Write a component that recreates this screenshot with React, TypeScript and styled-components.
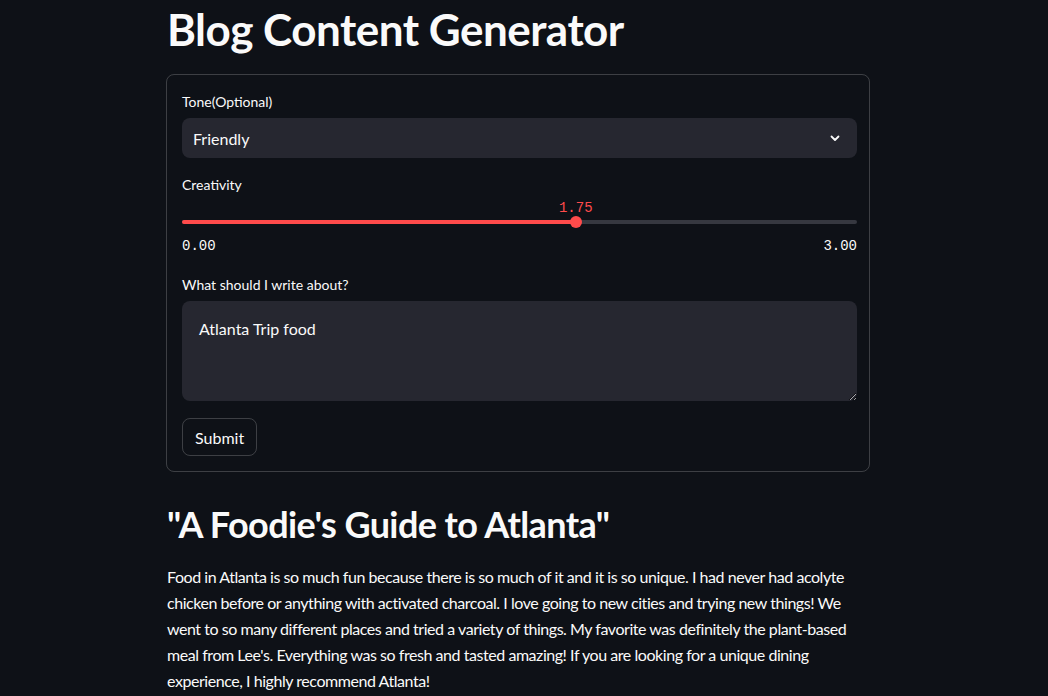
import React from 'react'
import styled, { createGlobalStyle } from 'styled-components'

const GlobalStyle = createGlobalStyle`
  html, body {
    margin: 0;
    padding: 0;
    background: #0e1117;
    color: rgb(250, 250, 250);
    font-family: Lato, "Noto Sans", sans-serif;
  }
`;

const Main = styled.main`
  width: 704px;
  margin-left: 166px;
`;

const Title = styled.h1`
  margin: 0;
  padding: 3px 0 19px 1px;
  font-size: 44px;
  line-height: 52px;
  font-weight: 700;
  letter-spacing: -0.5px;
`;

const Form = styled.form`
  border: 1px solid rgba(250, 250, 250, 0.2);
  border-radius: 8px;
  padding: 16px 12px 15px 15px;
  display: flex;
  flex-direction: column;
  gap: 16px;
`;

const Field = styled.div`
  display: flex;
  flex-direction: column;
`;

const Label = styled.label`
  font-size: 14px;
  line-height: 21px;
  margin-bottom: 6px;
`;

const Select = styled.div`
  height: 40px;
  background: #262730;
  border-radius: 8px;
  display: flex;
  align-items: center;
  justify-content: space-between;
  padding: 0 16px 0 11px;
  font-size: 16px;
`;

const SliderBox = styled.div`
  position: relative;
  display: flex;
  flex-direction: column;
`;

const ValueRow = styled.div`
  position: relative;
  height: 18px;
`;

const Value = styled.span`
  position: absolute;
  top: -2px;
  transform: translateX(-50%);
  font-family: "Liberation Mono", "DejaVu Sans Mono", monospace;
  font-size: 14px;
  line-height: 18px;
  color: #ff4b4b;
`;

const Track = styled.div`
  position: relative;
  height: 4px;
  margin: 1px 0 3px;
  border-radius: 2px;
  background: #363840;
`;

const Fill = styled.div`
  position: absolute;
  left: 0;
  top: 0;
  bottom: 0;
  border-radius: 2px;
  background: #ff4b4b;
`;

const Thumb = styled.div`
  position: absolute;
  top: 50%;
  width: 12px;
  height: 12px;
  border-radius: 50%;
  background: #ff4b4b;
  transform: translate(-50%, -50%);
`;

const MinMax = styled.div`
  display: flex;
  justify-content: space-between;
  margin-top: 9px;
  padding-bottom: 1px;
  font-family: "Liberation Mono", "DejaVu Sans Mono", monospace;
  font-size: 14px;
  line-height: 21px;
`;

const TextArea = styled.textarea`
  height: 100px;
  box-sizing: border-box;
  background: #262730;
  border: none;
  border-radius: 8px;
  padding: 16px 17px;
  color: rgb(250, 250, 250);
  font-family: Lato, "Noto Sans", sans-serif;
  font-size: 16px;
  line-height: 24px;
  resize: vertical;
  outline: none;
`;

const Button = styled.button`
  align-self: flex-start;
  height: 38px;
  margin-top: 1px;
  padding: 0 12px;
  background: transparent;
  border: 1px solid rgba(250, 250, 250, 0.2);
  border-radius: 8px;
  color: rgb(250, 250, 250);
  font-family: Lato, "Noto Sans", sans-serif;
  font-size: 16px;
`;

const Heading = styled.h2`
  margin: 0;
  padding: 30px 0 18px 1px;
  font-size: 36px;
  line-height: 44px;
  font-weight: 700;
  letter-spacing: -0.6px;
`;

const Paragraph = styled.p`
  margin: 0;
  padding-left: 1px;
  font-size: 16px;
  line-height: 26px;
  letter-spacing: -0.45px;
`;

function Chevron() {
  return (
    <svg width="12" height="12" viewBox="0 0 12 12" fill="none">
      <polyline points="2.5,4.5 6,8 9.5,4.5" stroke="#fafafa" strokeWidth="1.8" strokeLinecap="round" strokeLinejoin="round" />
    </svg>
  );
}

function App() {
  const min = 0;
  const max = 3;
  const value = 1.75;
  const pct = ((value - min) / (max - min)) * 100;

  return (
    <>
      <GlobalStyle />
      <Main>
        <Title>Blog Content Generator</Title>
        <Form onSubmit={(e) => e.preventDefault()}>
          <Field>
            <Label>Tone(Optional)</Label>
            <Select>
              <span>Friendly</span>
              <Chevron />
            </Select>
          </Field>
          <Field>
            <Label>Creativity</Label>
            <SliderBox>
              <ValueRow>
                <Value style={{ left: `${pct}%` }}>{value.toFixed(2)}</Value>
              </ValueRow>
              <Track>
                <Fill style={{ width: `${pct}%` }} />
                <Thumb style={{ left: `${pct}%` }} />
              </Track>
              <MinMax>
                <span>{min.toFixed(2)}</span>
                <span>{max.toFixed(2)}</span>
              </MinMax>
            </SliderBox>
          </Field>
          <Field>
            <Label>What should I write about?</Label>
            <TextArea defaultValue="Atlanta Trip food" readOnly />
          </Field>
          <Button type="submit">Submit</Button>
        </Form>
        <Heading>"A Foodie's Guide to Atlanta"</Heading>
        <Paragraph>
          Food in Atlanta is so much fun because there is so much of it and it is so unique. I had never had acolyte
          chicken before or anything with activated charcoal. I love going to new cities and trying new things! We
          went to so many different places and tried a variety of things. My favorite was definitely the plant-based
          meal from Lee's. Everything was so fresh and tasted amazing! If you are looking for a unique dining
          experience, I highly recommend Atlanta!
        </Paragraph>
      </Main>
    </>
  );
}

export default App
